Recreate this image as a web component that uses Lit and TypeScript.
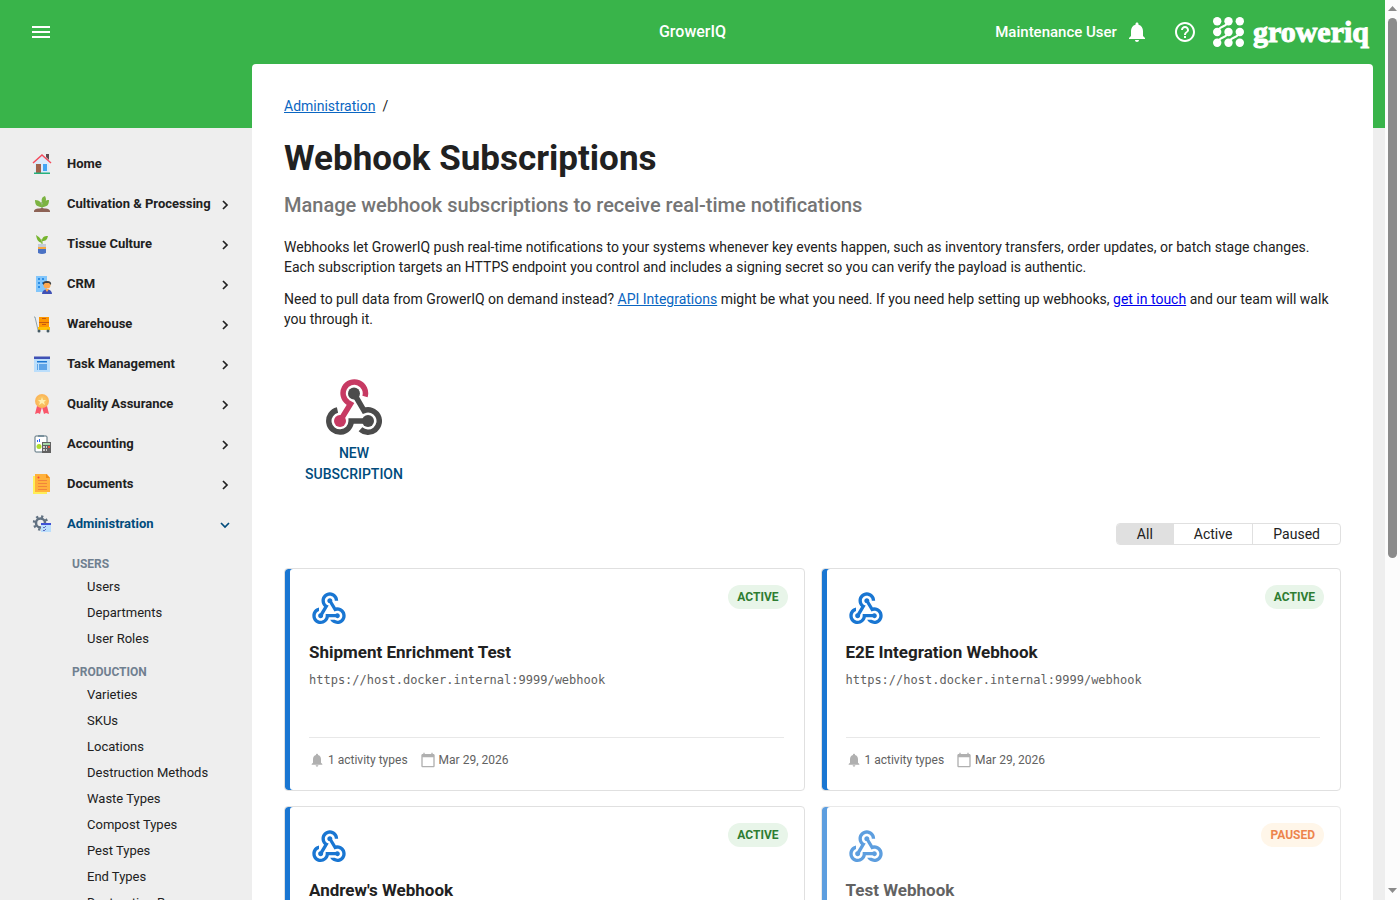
import { LitElement, html, css, svg } from "lit";
import { customElement, state } from "lit/decorators.js";

const webhookPath =
  "M10 15h5.880c.27-.31.67-.5 1.120-.5.83 0 1.500.67 1.500 1.500s-.67 1.500-1.500 1.500c-.44 0-.84-.19-1.120-.5H11.900c-.46 2.280-2.480 4-4.900 4-2.760 0-5-2.240-5-5 0-2.420 1.720-4.440 4-4.900v2.070c-1.160.41-2 1.530-2 2.830 0 1.650 1.350 3 3 3s3-1.350 3-3v-1zm2.500-11c1.650 0 3 1.350 3 3h2c0-2.760-2.240-5-5-5s-5 2.240-5 5c0 1.430.6 2.710 1.550 3.620l-2.350 3.900c-.68.14-1.200.75-1.200 1.480 0 .83.67 1.500 1.500 1.500s1.500-.67 1.500-1.500c0-.16-.02-.31-.07-.45l3.380-5.630C10.490 9.610 9.500 8.420 9.500 7c0-1.650 1.350-3 3-3zm4.500 9c-.64 0-1.230.2-1.720.54l-3.050-5.070C11.530 8.350 11 7.740 11 7c0-.83.67-1.500 1.500-1.500S14 6.170 14 7c0 .15-.02.29-.06.43l2.190 3.650c.28-.05.57-.08.87-.08 2.760 0 5 2.240 5 5s-2.240 5-5 5c-1.850 0-3.470-1.010-4.330-2.500h2.670c.48.32 1.050.5 1.660.5 1.650 0 3-1.350 3-3s-1.350-3-3-3z";

// Three-lobed webhook mark: pink, dark and dark lobes, each ending in a dot.
const webhookMark = svg`
  <g fill="none" stroke-width="5.500">
    <path stroke="#c73a63" d="M39 17.500A11.200 11.200 0 1 0 22 23.500L24.500 25 14 42"/>
    <path stroke="#4b4b4b" d="M28 14.500L38 31.600A11.200 11.200 0 1 1 34.500 50.300"/>
    <path stroke="#4b4b4b" d="M42 42H25.200A11.200 11.200 0 1 1 11.500 31"/>
  </g>
  <circle cx="14" cy="42" r="6" fill="#c73a63"/>
  <circle cx="28" cy="14.500" r="6" fill="#4b4b4b"/>
  <circle cx="42" cy="42" r="6" fill="#4b4b4b"/>`;

const bell = svg`<path d="M12 22c1.100 0 2-.9 2-2h-4c0 1.100.89 2 2 2zm6-6v-5c0-3.070-1.640-5.640-4.500-6.320V4c0-.83-.67-1.500-1.500-1.500s-1.500.67-1.500 1.500v.68C7.630 5.360 6 7.920 6 11v5l-2 2v1h16v-1l-2-2z"/>`;
const help = svg`<path d="M11 18h2v-2h-2v2zm1-16C6.480 2 2 6.480 2 12s4.480 10 10 10 10-4.480 10-10S17.520 2 12 2zm0 18c-4.410 0-8-3.590-8-8s3.590-8 8-8 8 3.590 8 8-3.590 8-8 8zm0-14c-2.210 0-4 1.790-4 4h2c0-1.100.9-2 2-2s2 .9 2 2c0 2-3 1.750-3 5h2c0-2.250 3-2.500 3-5 0-2.210-1.790-4-4-4z"/>`;
const calendar = svg`<path d="M20 3h-1V1h-2v2H7V1H5v2H4c-1.100 0-2 .9-2 2v16c0 1.100.9 2 2 2h16c1.100 0 2-.9 2-2V5c0-1.100-.9-2-2-2zm0 18H4V8h16v13z"/>`;

const icons: Record<string, unknown> = {
  home: svg`<path fill="#5d4a50" d="M14 0h3v6l-3-3z"/><path fill="#dcebfa" d="M3 8l7-6 7 6v11H3z"/><path fill="#a1624b" d="M4 10h5v9H4z"/><path fill="#42a5f5" d="M11 10h4v7h-4z"/><path fill="none" stroke="#f44b5c" stroke-width="1.500" d="M1 9l9-8 9 8"/><path fill="#26b07c" d="M2 18.500h16V20H2z"/>`,
  plant: svg`<path fill="none" stroke="#558b2f" d="M10 16V8"/><path fill="#7cb342" d="M10 13C5 13 3 11 3 6c5 0 7 3 7 7zM10 9c-1-4 0-6 3-7 2 4 1 6-3 7zM10 13c0-5 3-7 7-7 0 5-2 7-7 7z"/><path fill="#8d6255" d="M2 17c1-3 4-2 8-3 4 1 7 0 8 3v1H2z"/>`,
  tissue: svg`<path fill="#76b52e" d="M10 9C9 4 7 3 4 1c1 5 2 7 6 8zM10 7c0-4 2-5 6-5-1 4-2 5-6 5z"/><path stroke="#76b52e" d="M10 5v7"/><path fill="#c3cbd8" d="M6 10h8v9H6z"/><path fill="#f5a742" d="M6 13h8v2H6z"/><path fill="#4a72c4" d="M6 15h8v4q-4 2-8 0z"/>`,
  crm: svg`<rect x="4" y="2" width="11" height="16" fill="#82c6fb"/><path fill="#2b8ee6" d="M6 4h2v2H6zM10 4h2v2h-2zM6 8h2v2H6zM10 8h2v2h-2zM6 12h2v2H6z"/><circle cx="15" cy="11" r="3.500" fill="#ffa94f"/><path fill="#424242" d="M11 11q-1-4 4-4t4 4l-2-2h-4z"/><path fill="#3f51b5" d="M10 20q0-4 5-5 5 1 5 5z"/><path fill="#ffa94f" d="M13 15h4l-2 3z"/>`,
  warehouse: svg`<path fill="#ff9800" d="M7 3h10v12H7z"/><path fill="#c75b10" d="M10 4h4v1h-4zM7 8h10v1H7zM10 10h4v1h-4z"/><path fill="none" stroke="#90a4ae" d="M2 3h1l3 13"/><path fill="#ffc107" d="M6 13h12v3H6z"/><circle cx="7" cy="17" r="1.500" fill="#455a64"/><circle cx="16" cy="17" r="1.500" fill="#455a64"/>`,
  task: svg`<rect x="2" y="3" width="16" height="15" fill="#bbdefb"/><path fill="#3f51b5" d="M2 2.500h16V5H2z"/><path fill="#1976d2" d="M5 7h10v1.500H5z"/><path fill="#5da4e8" d="M5 10h1v6H5zM7 10h8v6H7z"/>`,
  quality: svg`<path fill="#f9566a" d="M5 12l-2 8 3-1 2 1 2-7zM15 12l2 8-3-1-2 1-2-7z"/><circle cx="10" cy="7" r="7" fill="#fbb75a"/><circle cx="10" cy="7" r="5" fill="#f9c260"/><path fill="#fff0b0" d="M10 3l1 3h3l-2 2 1 3-3-2-3 2 1-3-2-2h3z"/>`,
  accounting: svg`<rect x="3" y="2" width="12" height="16" rx="1" fill="#fff" stroke="#546e7a"/><path fill="#78909c" d="M6 1h6v2H6z"/><path fill="#2962ff" d="M5 6h1v2H5zM7 5h1v3H7z"/><circle cx="7" cy="12.500" r="2.500" fill="#aedb30"/><path fill="#616161" d="M10 8h9v11h-9z"/><path fill="#a5d6a7" d="M11 9h7v2h-7z"/><path fill="#ccc" d="M11 12h2v2h-2zM14 12h1v2h-1zM11 15h2v2h-2zM14 15h1v2h-1z"/><path fill="#e0533f" d="M16 12h2v2h-2z"/>`,
  documents: svg`<path fill="#ffee58" d="M1 2h14v18H1z"/><path fill="#ffb13b" d="M3 0h12l3 4v14H3z"/><path fill="#ef8b17" d="M14 0l4 4h-4z"/><path stroke="#f1843c" d="M6 6.500h9M6 9.500h9M6 12.500h9M6 15.500h9"/><circle cx="6.500" cy="3.500" r="1" fill="#f4433c"/>`,
  admin: svg`<circle cx="8.500" cy="9" r="6.500" fill="none" stroke="#607080" stroke-width="2.500" stroke-dasharray="2.200 2.880"/><circle cx="8.500" cy="9" r="4.500" fill="none" stroke="#607080" stroke-width="2.500"/><path fill="#bbdefb" d="M9 9h10v9H9z"/><path fill="#3f51d5" d="M9 9h10v2H9z"/><path fill="none" stroke="#5c6bc0" d="M11 13l1 1 2-2M11 16l1 1 2-2"/>`,
};

const nav: [string, string][] = [
  ["home", "Home"],
  ["plant", "Cultivation & Processing"],
  ["tissue", "Tissue Culture"],
  ["crm", "CRM"],
  ["warehouse", "Warehouse"],
  ["task", "Task Management"],
  ["quality", "Quality Assurance"],
  ["accounting", "Accounting"],
  ["documents", "Documents"],
  ["admin", "Administration"],
];

const groups = [
  { title: "USERS", items: ["Users", "Departments", "User Roles"] },
  {
    title: "PRODUCTION",
    items: ["Varieties", "SKUs", "Locations", "Destruction Methods", "Waste Types", "Compost Types", "Pest Types", "End Types", "Destruction Reasons"],
  },
];

const hooks = [
  { name: "Shipment Enrichment Test", active: true },
  { name: "E2E Integration Webhook", active: true },
  { name: "Andrew's Webhook", active: true },
  { name: "Test Webhook", active: false },
];

@customElement("app-root")
export class AppRoot extends LitElement {
  @state() private filter = "All";

  static styles = css`
    * { box-sizing: border-box; }
    :host {
      display: flex;
      height: 100vh;
      overflow: hidden;
      font: 14px/20px Roboto, sans-serif;
      color: #212121;
      background: #eee;
    }
    a { color: #0a66c2; }
    button { font: inherit; color: inherit; border: 0; background: none; padding: 0; cursor: pointer; }
    svg { display: block; flex: none; }
    .page { flex: 1; min-width: 0; display: flex; flex-direction: column; background: linear-gradient(#39b44a 128px, #eee 128px); }
    .top { flex: none; height: 64px; display: grid; grid-template-columns: 1fr auto 1fr; align-items: center; padding: 0 16px; color: #fff; font-size: 15px; font-weight: 500; }
    .menu { justify-self: start; margin-left: 13px; }
    .brand { font-size: 16px; line-height: 22px; }
    .tools { display: flex; align-items: center; justify-content: flex-end; }
    .user { margin-right: 8px; }
    .bell { margin-right: 24px; }
    .help { margin-right: 16px; }
    .logo { display: flex; align-items: center; gap: 9px; }
    .word { font: 700 30px/32px "Liberation Serif", serif; -webkit-text-stroke: 1px #fff; }
    .body { flex: 1; min-height: 0; display: flex; }
    .side { flex: none; width: 252px; padding-top: 80px; overflow: hidden; }
    .side ul { list-style: none; margin: 0; padding: 0; }
    .nav { display: flex; align-items: center; height: 40px; padding: 0 19px 0 32px; color: #212121; text-decoration: none; font-size: 13px; font-weight: 700; }
    .nav span { flex: 1; margin-left: 15px; white-space: nowrap; }
    .nav .chev { margin-top: 2px; }
    .nav.on { color: #004b7c; }
    .group { margin: 0; padding: 13px 0 2px 72px; font-size: 12px; line-height: 15px; font-weight: 700; color: #708090; }
    .sub { display: block; padding-left: 87px; font-size: 13px; line-height: 26px; color: #212121; text-decoration: none; }
    .main { flex: 1; min-width: 0; margin-right: 12px; padding: 32px 32px 0; background: #fff; border-radius: 4px 4px 0 0; overflow: hidden; }
    .crumb { display: flex; gap: 7px; }
    h1 { margin: 21px 0 0; font-size: 35px; line-height: 44px; font-weight: 700; }
    h2 { margin: 11px 0 0; font-size: 20px; line-height: 26px; font-weight: 500; color: #757575; }
    p { margin: 0; }
    .intro { display: grid; gap: 12px; margin-top: 19px; }
    .intro .mail { color: #00e; }
    .new { display: flex; flex-direction: column; align-items: center; gap: 8px; width: 140px; margin-top: 50px; padding: 0 10px; font-weight: 500; line-height: 21px; color: #004b7c; }
    .filters { display: flex; width: max-content; margin: 38px 0 0 auto; border: 1px solid #e0e0e0; border-radius: 4px; overflow: hidden; }
    .filters button { padding: 0 20px; line-height: 20px; }
    .filters button + button { border-left: 1px solid #e0e0e0; }
    .filters .on { background: #e0e0e0; }
    .cards { display: grid; grid-template-columns: 1fr 1fr; gap: 15px 16px; margin-top: 23px; }
    .card { padding: 16px 16px 20px 24px; border: 1px solid #e0e0e0; border-radius: 4px; box-shadow: inset 5px 0 #1976d2; }
    .card.paused { opacity: 0.7; }
    .head { display: flex; justify-content: space-between; align-items: flex-start; height: 54px; }
    .head svg { margin-top: 4px; }
    .badge { padding: 0 9px; border-radius: 12px; font-size: 12px; line-height: 24px; font-weight: 700; color: #2e7d32; background: #e8f5e9; }
    .paused .badge { color: #e65100; background: #fff3e0; }
    h3 { margin: 0; font-size: 17px; line-height: 26px; font-weight: 700; }
    .url { margin-top: 5px; font: 12px/20px "DejaVu Sans Mono", monospace; color: #616161; }
    .meta { display: flex; align-items: center; margin: 47px 4px 0 0; padding-top: 12px; border-top: 1px solid #e8e8e8; font-size: 12px; color: #616161; }
    .meta span { margin: 0 12px 0 3px; }
    .rail { flex: none; width: 15px; display: flex; flex-direction: column; align-items: center; padding: 4px 0; background: #fcfcfc; }
    .thumb { width: 9px; height: 60vh; margin: 6px 0 auto; border-radius: 5px; background: #8b8b8b; }
  `;

  render() {
    return html`
      <div class="page">
        <header class="top">
          <button class="menu" aria-label="Menu">
            <svg width="24" height="24" viewBox="0 0 24 24" fill="#fff"><path d="M3 18h18v-2H3v2zm0-5h18v-2H3v2zm0-7v2h18V6H3z"/></svg>
          </button>
          <div class="brand">GrowerIQ</div>
          <div class="tools">
            <span class="user">Maintenance User</span>
            <button class="bell" aria-label="Notifications"><svg width="24" height="24" viewBox="0 0 24 24" fill="#fff">${bell}</svg></button>
            <button class="help" aria-label="Help"><svg width="24" height="24" viewBox="0 0 24 24" fill="#fff">${help}</svg></button>
            <div class="logo">
              <svg width="31" height="30" viewBox="0 0 31 30" fill="#fff">
                ${[4.2, 15.5, 26.8].map((x) => [4.2, 15, 25.8].map((y) => svg`<circle cx=${x} cy=${y} r="4.200"/>`))}
                <path fill="none" stroke="#fff" stroke-width="2" d="M15.500 4C14 11 6 8 4 15M15.500 15C14 22 6 19 4 26M27 15C25 22 17 19 15.500 26"/>
              </svg>
              <span class="word">groweriq</span>
            </div>
          </div>
        </header>
        <div class="body">
          <nav class="side">
            <ul>
              ${nav.map(([icon, label]) => html`<li><a class="nav ${icon === "admin" ? "on" : ""}" href="#">
                <svg width="20" height="20" viewBox="0 0 20 20">${icons[icon]}</svg><span>${label}</span>
                ${icon === "home" ? "" : html`<svg class="chev" width="16" height="16" viewBox="0 0 16 16" fill="none" stroke="currentColor" stroke-width="1.700"><path d=${icon === "admin" ? "M4 6l4 4 4-4" : "M6 4l4 4-4 4"}/></svg>`}</a></li>`)}
            </ul>
            ${groups.map((g) => html`<h4 class="group">${g.title}</h4>
              <ul>${g.items.map((i) => html`<li><a class="sub" href="#">${i}</a></li>`)}</ul>`)}
          </nav>
          <main class="main">
            <nav class="crumb"><a href="#">Administration</a><span>/</span></nav>
            <h1>Webhook Subscriptions</h1>
            <h2>Manage webhook subscriptions to receive real-time notifications</h2>
            <div class="intro">
              <p>Webhooks let GrowerIQ push real-time notifications to your systems whenever key events happen, such as inventory transfers, order updates, or batch stage changes. Each subscription targets an HTTPS endpoint you control and includes a signing secret so you can verify the payload is authentic.</p>
              <p>Need to pull data from GrowerIQ on demand instead? <a href="#">API Integrations</a> might be what you need. If you need help setting up webhooks, <a class="mail" href="#">get in touch</a> and our team will walk you through it.</p>
            </div>
            <button class="new">
              <svg width="56" height="56" viewBox="0 0 56 56">${webhookMark}</svg>
              NEW SUBSCRIPTION
            </button>
            <div class="filters">
              ${["All", "Active", "Paused"].map((f) => html`<button class=${f === this.filter ? "on" : ""} @click=${() => (this.filter = f)}>${f}</button>`)}
            </div>
            <section class="cards">
              ${hooks.map((h) => html`<article class="card ${h.active ? "" : "paused"}">
                <div class="head">
                  <svg width="40" height="40" viewBox="0 0 24 24" fill="#1976d2"><path d=${webhookPath}/></svg>
                  <span class="badge">${h.active ? "ACTIVE" : "PAUSED"}</span>
                </div>
                <h3>${h.name}</h3>
                <div class="url">https://host.docker.internal:9999/webhook</div>
                <div class="meta">
                  <svg width="16" height="16" viewBox="0 0 24 24" fill="#b0b0b0">${bell}</svg><span>1 activity types</span>
                  <svg width="16" height="16" viewBox="0 0 24 24" fill="#b0b0b0">${calendar}</svg><span>Mar 29, 2026</span>
                </div>
              </article>`)}
            </section>
          </main>
        </div>
      </div>
      <div class="rail">
        <svg width="9" height="8" viewBox="0 0 9 8" fill="#8b8b8b"><path d="M0 7l4.500-5L9 7z"/></svg>
        <div class="thumb"></div>
        <svg width="9" height="8" viewBox="0 0 9 8" fill="#8b8b8b"><path d="M0 0l4.500 5L9 0z"/></svg>
      </div>
    `;
  }
}
